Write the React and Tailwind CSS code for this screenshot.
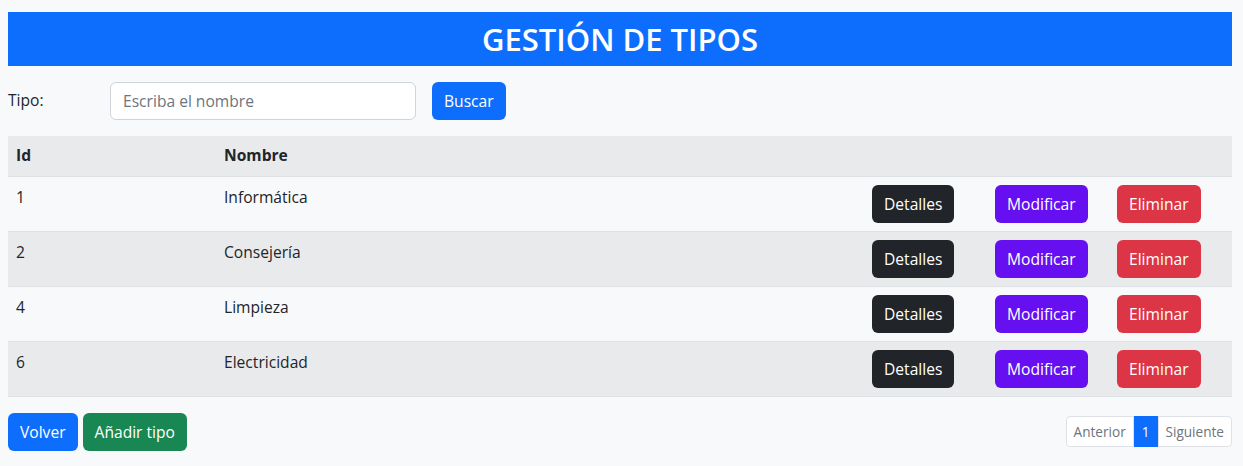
import React, { useState } from "react";

const tipos = [
  { id: 1, nombre: "Informática" },
  { id: 2, nombre: "Consejería" },
  { id: 4, nombre: "Limpieza" },
  { id: 6, nombre: "Electricidad" },
];

function Btn({ className, children }) {
  return (
    <button className={`h-[38px] px-3 rounded-md text-white text-[15.6px] leading-6 ${className}`}>
      {children}
    </button>
  );
}

export default function App() {
  const [busqueda, setBusqueda] = useState("");

  return (
    <div
      className="min-h-[466px] bg-[#f8f9fa] pl-2 pr-[11px] pt-3 text-[#212529] text-[15.6px]"
      style={{ fontFamily: '"Open Sans", "Noto Sans", sans-serif' }}
    >
      <div className="h-[54px] bg-[#0d6efd] flex items-center justify-center">
        <h1 className="text-white text-[31px] font-semibold leading-none">GESTIÓN DE TIPOS</h1>
      </div>

      <div className="flex items-start mt-4">
        <label className="w-[102px] pt-[6px] leading-6">Tipo:</label>
        <input
          type="text"
          value={busqueda}
          onChange={(e) => setBusqueda(e.target.value)}
          placeholder="Escriba el nombre"
          className="w-[306px] h-[38px] px-3 bg-white border border-[#ced4da] rounded-md placeholder:text-[#6c757d] outline-none"
        />
        <Btn className="ml-4 bg-[#0d6efd]">Buscar</Btn>
      </div>

      <table className="w-full mt-4 border-collapse">
        <thead>
          <tr className="bg-[#e9eaec] border-b border-[#dee2e6]">
            <th className="w-[208px] h-[40px] px-2 text-left font-bold">Id</th>
            <th className="px-2 text-left font-bold">Nombre</th>
            <th className="w-[123px]"></th>
            <th className="w-[122px]"></th>
            <th className="w-[123px]"></th>
          </tr>
        </thead>
        <tbody>
          {tipos.map((t, i) => (
            <tr
              key={t.id}
              className={`border-b border-[#dee2e6] ${i % 2 === 1 ? "bg-[#e9eaec]" : "bg-[#f8f9fa]"}`}
            >
              <td className="h-[55px] px-2 pt-2 align-top leading-6">{t.id}</td>
              <td className="px-2 pt-2 align-top leading-6">{t.nombre}</td>
              <td className="px-2 align-middle">
                <Btn className="bg-[#212529]">Detalles</Btn>
              </td>
              <td className="px-2 align-middle">
                <Btn className="bg-[#6610f2]">Modificar</Btn>
              </td>
              <td className="px-2 align-middle">
                <Btn className="bg-[#dc3545]">Eliminar</Btn>
              </td>
            </tr>
          ))}
        </tbody>
      </table>

      <div className="flex items-center justify-between mt-4">
        <div className="flex gap-[5px]">
          <Btn className="bg-[#0d6efd]">Volver</Btn>
          <Btn className="bg-[#198754]">Añadir tipo</Btn>
        </div>
        <div className="flex text-[13.6px] leading-[19px]">
          <span className="px-[7px] py-[5px] bg-white border border-[#dee2e6] rounded-l text-[#6c757d]">Anterior</span>
          <span className="px-[7px] py-[5px] bg-[#0d6efd] border border-[#0d6efd] text-white">1</span>
          <span className="px-[7px] py-[5px] bg-white border border-[#dee2e6] rounded-r text-[#6c757d]">Siguiente</span>
        </div>
      </div>
    </div>
  );
}
